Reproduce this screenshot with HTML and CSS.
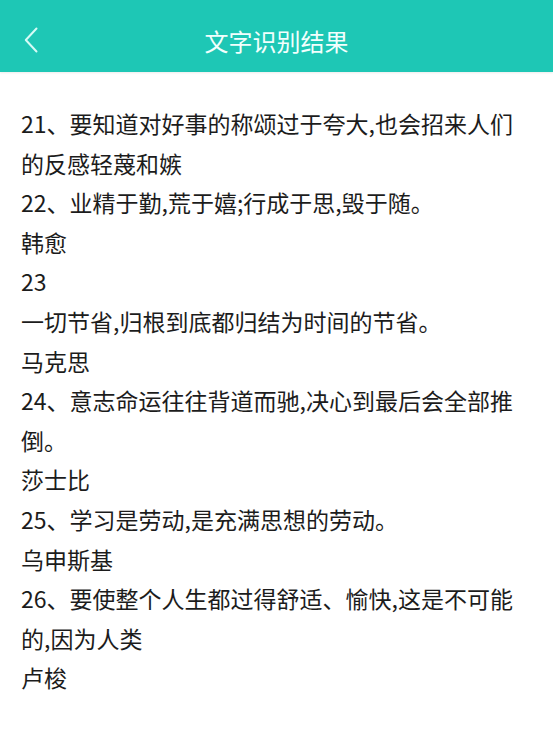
FILE: index.html
```html
<!DOCTYPE html>
<html lang="zh-CN">
<head>
<meta charset="utf-8">
<title>文字识别结果</title>
<link rel="stylesheet" href="styles.css">
</head>
<body>
<header class="topbar">
  <span class="back" aria-label="返回">
    <svg width="14" height="26" viewBox="0 0 14 26"><polyline points="12.5,1.5 1.8,13 12.5,24.5" fill="none" stroke="currentColor" stroke-width="2" stroke-linecap="round" stroke-linejoin="round"/></svg>
  </span>
  <h1 class="title">文字识别结果</h1>
</header>
<main class="result">
  <p>21、要知道对好事的称颂过于夸大,也会招来人们的反感轻蔑和嫉</p>
  <p>22、业精于勤,荒于嬉;行成于思,毁于随。</p>
  <p>韩愈</p>
  <p>23</p>
  <p>一切节省,归根到底都归结为时间的节省。</p>
  <p>马克思</p>
  <p>24、意志命运往往背道而驰,决心到最后会全部推倒。</p>
  <p>莎士比</p>
  <p>25、学习是劳动,是充满思想的劳动。</p>
  <p>乌申斯基</p>
  <p>26、要使整个人生都过得舒适、愉快,这是不可能的,因为人类</p>
  <p>卢梭</p>
</main>
</body>
</html>
```
FILE: styles.css
```css
html, body {
  margin: 0;
  padding: 0;
  background: #ffffff;
}
body {
  font-family: "Noto Sans CJK SC", "Noto Sans", sans-serif;
  width: 553px;
  height: 742px;
  overflow: hidden;
}
.topbar {
  position: relative;
  height: 72px;
  background: #1ec7b5;
  display: flex;
  align-items: center;
  justify-content: center;
  box-shadow: 0 1px 2px rgba(0, 0, 0, 0.08);
}
.back {
  position: absolute;
  left: 24px;
  top: 27px;
  color: #d6fbf6;
  display: block;
  line-height: 0;
}
.title {
  margin: 8px 0 0 0;
  font-size: 24px;
  font-weight: 400;
  color: #f2fffd;
  letter-spacing: 0px;
}
.result {
  padding: 32px 25px 0 21px;
  color: #1c1c1c;
  font-size: 23px;
  line-height: 39.6px;
}
.result p {
  margin: 0;
}
```
